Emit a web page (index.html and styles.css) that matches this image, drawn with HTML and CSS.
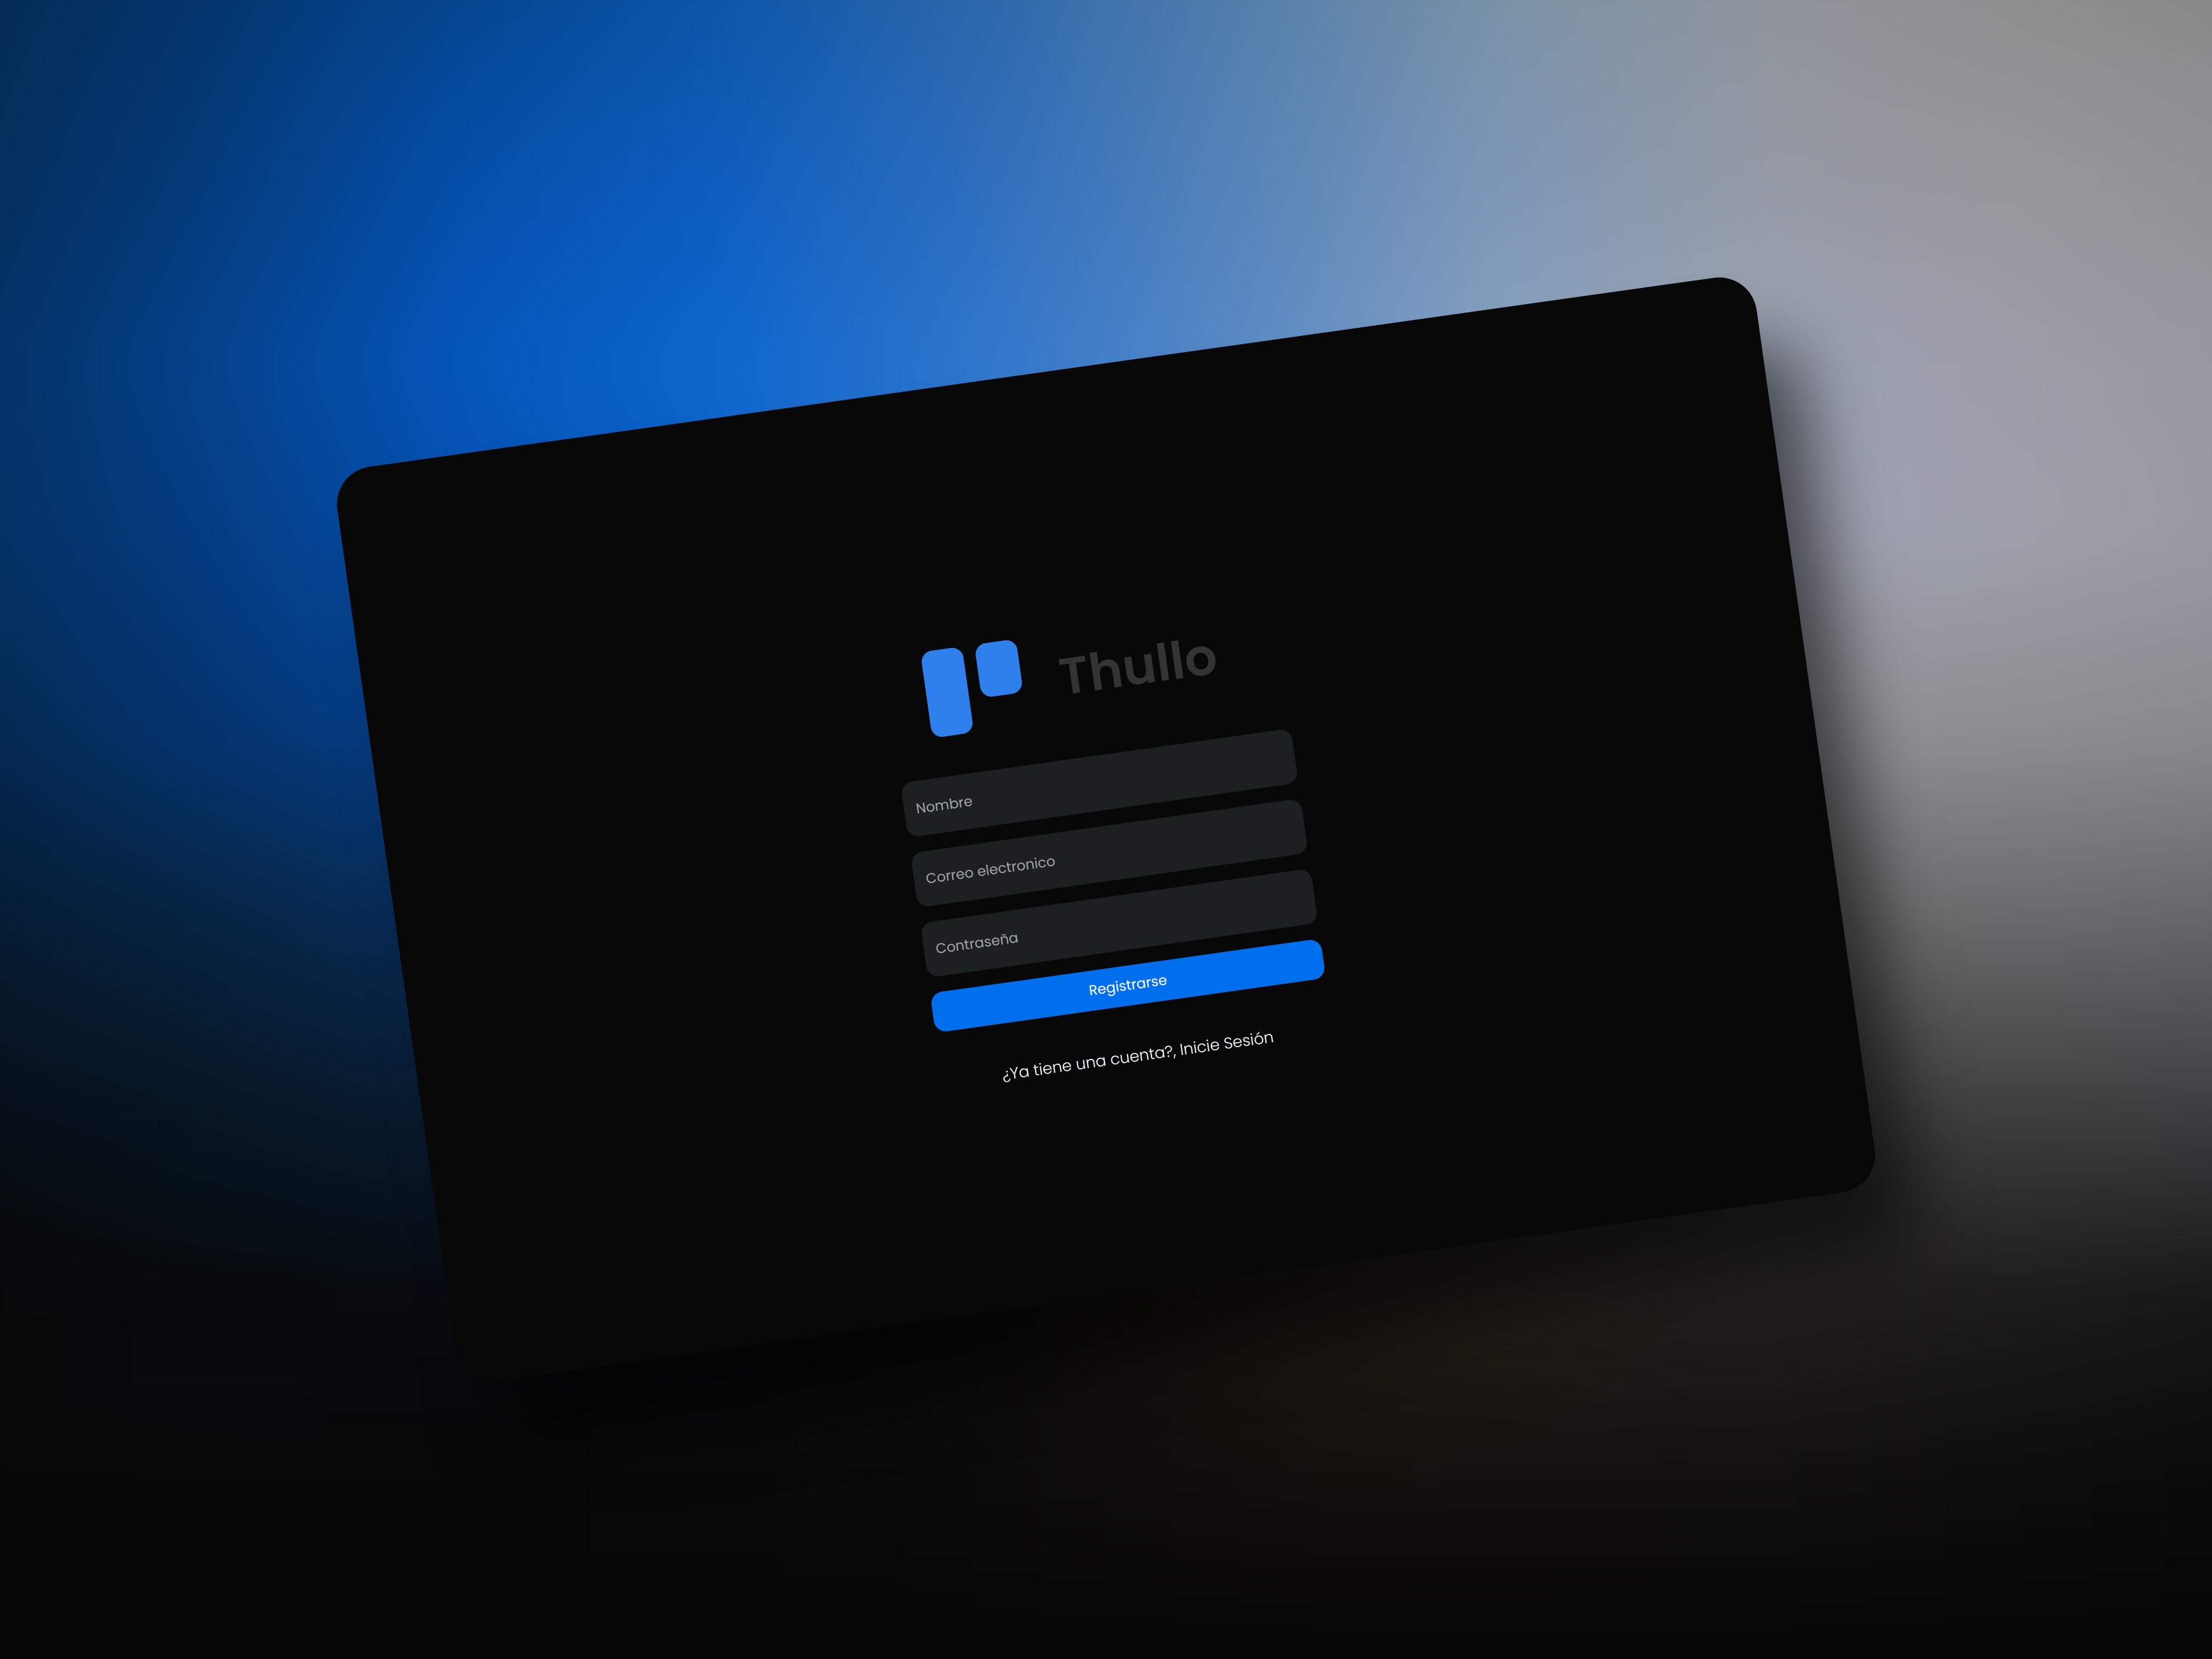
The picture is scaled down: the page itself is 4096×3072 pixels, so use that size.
FILE: index.html
```html
<!DOCTYPE html>
<html lang="es">
<head>
<meta charset="utf-8">
<meta name="viewport" content="width=device-width, initial-scale=1">
<title>Thullo</title>
<link rel="stylesheet" href="styles.css">
</head>
<body>
<div class="backdrop" aria-hidden="true">
  <div class="glow">
    <div class="band band-1"></div>
    <div class="band band-2"></div>
    <div class="band band-3"></div>
    <div class="band band-4"></div>
    <div class="band band-5"></div>
    <div class="band band-6"></div>
    <div class="band band-7"></div>
    <div class="band band-8"></div>
    <div class="band band-9"></div>
    <div class="band band-10"></div>
  </div>
</div>
<main class="card">
  <header class="brand">
    <svg class="brand-mark" viewBox="0 0 179 161" aria-hidden="true">
      <rect width="78" height="161" rx="21"/>
      <rect x="101" width="78" height="100" rx="21"/>
    </svg>
    <h1 class="brand-name">Thullo</h1>
  </header>
  <form class="form">
    <input class="field" type="text" name="nombre" placeholder="Nombre" aria-label="Nombre">
    <input class="field" type="email" name="correo" placeholder="Correo electronico" aria-label="Correo electronico">
    <input class="field" type="password" name="clave" placeholder="Contraseña" aria-label="Contraseña">
    <button class="submit" type="submit">Registrarse</button>
  </form>
  <a class="login-link" href="#login">¿Ya tiene una cuenta?, Inicie Sesión</a>
</main>
</body>
</html>
```
FILE: styles.css
```css
* {
  box-sizing: border-box;
}

body {
  margin: 0;
  min-height: 100vh;
  display: flex;
  align-items: center;
  justify-content: center;
  overflow: hidden;
  background: #070707;
  font-family: Poppins, Inter, "Liberation Sans", sans-serif;
}

/* Blurred colour field: each band fades in over the one before it */
.backdrop {
  position: absolute;
  inset: 0;
  z-index: -1;
  overflow: hidden;
}

.glow {
  position: absolute;
  inset: -120px;
  filter: blur(50px);
}

.band {
  position: absolute;
  inset: 0;
  mask-image: linear-gradient(transparent var(--from), #000 var(--to));
}

.band-1 {
  mask-image: none;
  background: linear-gradient(90deg, #04284d, #04346a, #05448b, #0c54a4, #2b66a8, #517da9, #7991a4, #8f949c, #8e8d8c, #868584);
}

.band-2 {
  --from: 2%;
  --to: 13%;
  background: linear-gradient(90deg, #042b54, #043a78, #044ea8, #0d5dbd, #2d6dbc, #5583b7, #7c96b6, #9499a4, #97979c, #908f94);
}

.band-3 {
  --from: 13%;
  --to: 24%;
  background: linear-gradient(90deg, #042f5d, #04418a, #0456ba, #0d66cd, #2f76cc, #5889c5, #87a1bf, #9ba3b2, #9c9ca8, #98979f);
}

.band-4 {
  --from: 24%;
  --to: 34%;
  background: linear-gradient(90deg, #042f5b, #043b7f, #054fac, #0d60c4, #2f75cd, #5a8cc6, #8aa3c2, #9ea3b2, #9da0aa, #9797a0);
}

.band-5 {
  --from: 34%;
  --to: 45%;
  background: linear-gradient(90deg, #042548, #04326a, #063d84 20%, #063d84 50%, #8f9094 78%, #8b8c90 90%, #86888d);
}

.band-6 {
  --from: 45%;
  --to: 55%;
  background: linear-gradient(90deg, #051a30, #06233f, #082b55 20%, #082b55 50%, #6b6b6b 80%, #696a6b 90%, #646569);
}

.band-7 {
  --from: 55%;
  --to: 66%;
  background: linear-gradient(90deg, #080d16, #071420, #081a2d 20%, #081a2d 50%, #3e3e3c 82%, #3e3e3e 90%, #3c3d3f);
}

.band-8 {
  --from: 66%;
  --to: 76%;
  background: linear-gradient(90deg, #080808, #070a0d, #080b10, #080b0d, #0c0c0a, #1a1610, #231e17, #22201e, #1c1c1b, #141615);
}

.band-9 {
  --from: 76%;
  --to: 86%;
  background: linear-gradient(90deg, #080808, #080808 24%, #090a09 40%, #14110d 60%, #121110 78%, #0a0a0a);
}

.band-10 {
  --from: 86%;
  --to: 95%;
  background: #070707;
}

.card {
  width: 64.8%;
  aspect-ratio: 1454 / 937;
  padding-bottom: 5px;
  display: flex;
  flex-direction: column;
  align-items: center;
  justify-content: center;
  border-radius: 70px;
  background: #080808;
  box-shadow: 70px 130px 130px -10px rgba(0, 0, 0, 0.6);
  transform: rotate(-8deg);
}

.brand {
  width: 730px;
  padding: 76px 70px 74px;
  display: flex;
  gap: 70px;
}

.brand-mark {
  width: 179px;
  height: 161px;
  fill: #2f80ed;
}

.brand-name {
  margin: 24px 0 0;
  font-size: 95px;
  line-height: 116px;
  font-weight: 600;
  color: #333333;
}

.form {
  width: 730px;
  display: flex;
  flex-direction: column;
  gap: 29px;
}

.field {
  width: 100%;
  height: 102px;
  padding: 2px 22px 0;
  border: 0;
  border-radius: 22px;
  background: #1c2020;
  color: #ffffff;
  font: inherit;
  font-size: 26px;
}

.field::placeholder {
  color: #a1a1aa;
  opacity: 1;
}

.submit {
  height: 74px;
  padding: 0;
  border: 0;
  border-radius: 22px;
  background: #006fee;
  color: #ffffff;
  font: inherit;
  font-size: 26px;
}

.login-link {
  margin-top: 72px;
  font-size: 29px;
  line-height: 44px;
  color: #ffffff;
  font-weight: 300;
  text-decoration: none;
}
```
